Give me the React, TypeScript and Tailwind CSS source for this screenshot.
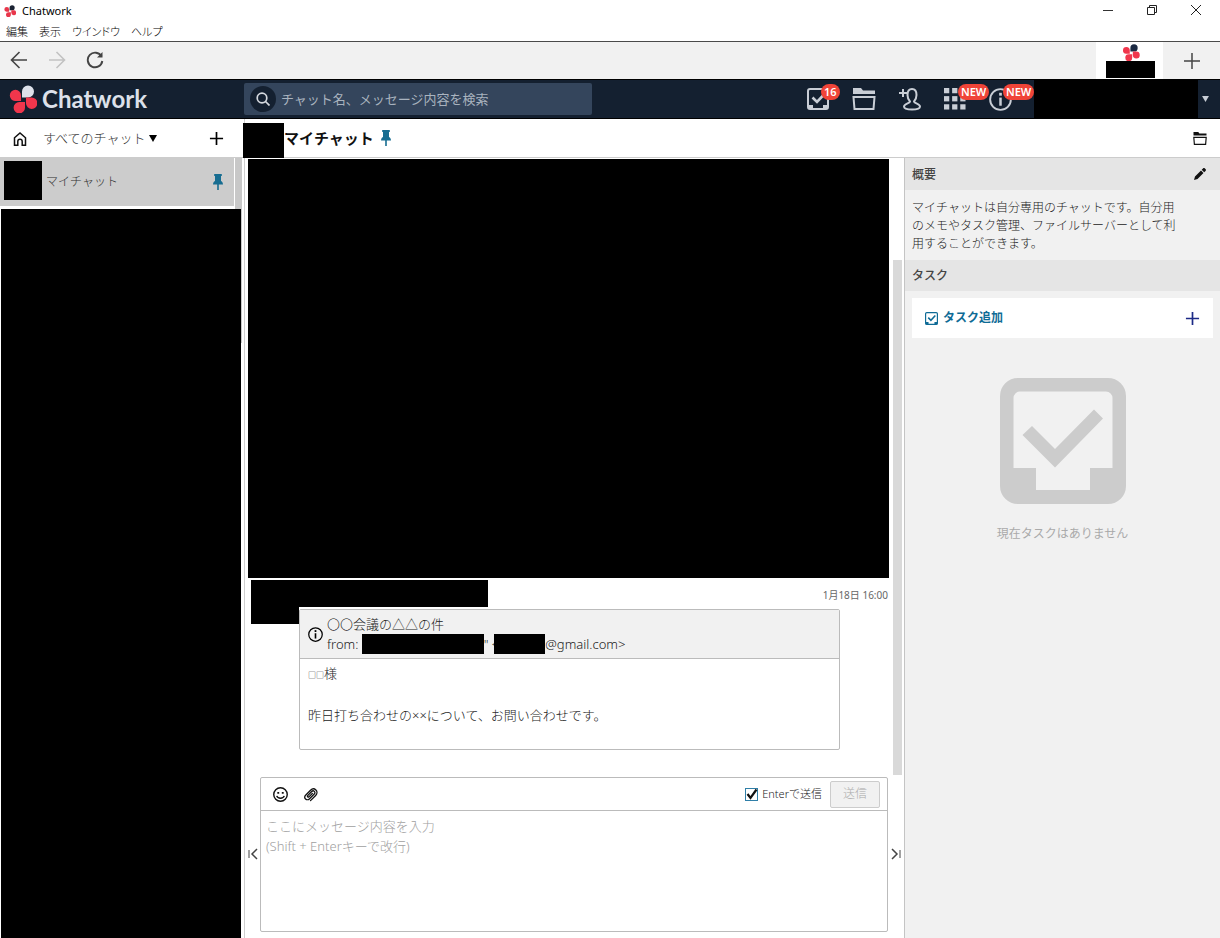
import React, { useState } from "react";

interface IconProps {
  className?: string;
}

interface LogoProps extends IconProps {
  accent: string;
  red: string;
}

const LogoMark: React.FC<LogoProps> = ({ className, accent, red }) => (
  <svg viewBox="0 0 28 28" className={className} aria-hidden="true">
    <path d="M13 12.5V6.5a6 6 0 1 1 6 6z" fill={accent} />
    <path d="M12 16H6a5.6 5.6 0 1 1 6-5.6z" fill={red} />
    <path d="M17 12.5h5.500a5.700 5.700 0 1 1-5.500 5.700z" fill={red} />
    <path d="M16 17v5.500a5.700 5.700 0 1 1-5.700-5.500z" fill={red} />
  </svg>
);

const TaskIcon: React.FC<IconProps> = ({ className }) => (
  <svg viewBox="0 0 126 126" className={className} fill="currentColor" aria-hidden="true">
    <path
      fillRule="evenodd"
      d="M18 0h90a18 18 0 0 1 18 18v90a18 18 0 0 1-18 18H18a18 18 0 0 1-18-18V18A18 18 0 0 1 18 0zM20 13.500a6.500 6.500 0 0 0-6.500 6.500v70H36v22h54V90h22.500V20a6.500 6.500 0 0 0-6.500-6.500z"
    />
    <path d="M32 48l23 23 39-39.500 9 9L55 89.500 22.500 57z" />
  </svg>
);

const SmallTaskIcon: React.FC<IconProps> = ({ className }) => (
  <svg viewBox="0 0 22 22" className={className} fill="none" stroke="currentColor" strokeWidth="2" aria-hidden="true">
    <rect x="1" y="1" width="20" height="20" rx="2" />
    <path d="M5.500 9.500l4.500 4.500 7.500-8" strokeWidth="2.600" />
    <path d="M1 17h5v4H1zM16 17h5v4h-5z" fill="currentColor" stroke="none" />
  </svg>
);

const FolderIcon: React.FC<IconProps> = ({ className }) => (
  <svg viewBox="0 0 24 22" className={className} aria-hidden="true">
    <path d="M1 0h8l2 2.500h12V6H1z" fill="currentColor" />
    <path d="M1.500 9h21l-1 12h-19z" fill="none" stroke="currentColor" strokeWidth="2" />
  </svg>
);

const AddPersonIcon: React.FC<IconProps> = ({ className }) => (
  <svg viewBox="0 0 22 24" className={className} fill="none" stroke="currentColor" strokeWidth="2" aria-hidden="true">
    <path d="M0 6h8M4 2v8" />
    <path d="M11 14.500c-2-2-2.500-4-2.500-6.500C8.500 4.500 10.200 2 13 2s4.500 2.500 4.500 6c0 2.500-.5 4.500-2.500 6.500 0 1.800 6 2 6 5 0 2-3.500 3-8 3s-8-1-8-3c0-3 6-3.200 6-5z" />
  </svg>
);

const GridIcon: React.FC<IconProps> = ({ className }) => (
  <svg viewBox="0 0 23 23" className={className} fill="currentColor" aria-hidden="true">
    {[0, 8.5, 17].map((y) =>
      [0, 8.5, 17].map((x) => <rect key={`${x}-${y}`} x={x} y={y} width="5.5" height="5.5" />),
    )}
  </svg>
);

const InfoIcon: React.FC<IconProps> = ({ className }) => (
  <svg viewBox="0 0 24 24" className={className} fill="none" stroke="currentColor" strokeWidth="2" aria-hidden="true">
    <circle cx="12" cy="12" r="10.800" />
    <path d="M12 10v8.500" strokeWidth="2.600" />
    <path d="M12 5v3" strokeWidth="2.800" />
  </svg>
);

const PinIcon: React.FC<IconProps> = ({ className }) => (
  <svg viewBox="0 0 10 16" className={className} fill="#176d91" aria-hidden="true">
    <path d="M1.200 0h7.600v2H8v5c1.200.6 1.900 1.600 2 3.500H5.800V16H4.200v-5.500H0C.1 8.600.8 7.600 2 7V2h-.8z" />
  </svg>
);

const PlusIcon: React.FC<IconProps> = ({ className }) => (
  <svg viewBox="0 0 16 16" className={className} fill="none" stroke="currentColor" strokeWidth="1.800" aria-hidden="true">
    <path d="M8 1v14M1 8h14" />
  </svg>
);

const TriangleIcon: React.FC<IconProps> = ({ className }) => (
  <svg viewBox="0 0 8 7" className={className} fill="currentColor" aria-hidden="true">
    <path d="M0 0h8L4 7z" />
  </svg>
);

const CollapseIcon: React.FC<IconProps> = ({ className }) => (
  <svg viewBox="0 0 10 12" className={className} fill="none" stroke="#444" strokeWidth="1.500" aria-hidden="true">
    <path d="M9 1L4 6l5 5" />
    <path d="M1 2v8" strokeWidth="1" />
  </svg>
);

const Badge: React.FC<{ children: React.ReactNode }> = ({ children }) => (
  <span className="absolute -top-1 left-[14px] rounded-full bg-[#f04438] px-[3px] text-[11px] leading-4 font-semibold text-white">
    {children}
  </span>
);

const WindowBar = () => (
  <div className="flex h-[22px] items-center pl-1 text-[11px] font-normal text-black">
    <LogoMark className="h-3 w-3" accent="#1b2333" red="#e8364a" />
    <span className="ml-[6px]">Chatwork</span>
    <div className="ml-auto flex pr-[2px] pb-[2px]">
      <button aria-label="最小化" className="flex h-5 w-11 items-center justify-center">
        <svg viewBox="0 0 10 10" className="h-[10px] w-[10px]" stroke="#333" fill="none">
          <path d="M0 5.500h10" />
        </svg>
      </button>
      <button aria-label="元に戻す" className="flex h-5 w-11 items-center justify-center">
        <svg viewBox="0 0 10 10" className="h-[10px] w-[10px]" stroke="#222" fill="none">
          <path d="M.5 2.500h7v7h-7zM2.500 2.500v-2h7v7h-2" />
        </svg>
      </button>
      <button aria-label="閉じる" className="flex h-5 w-11 items-center justify-center">
        <svg viewBox="0 0 10 10" className="h-[10px] w-[10px]" stroke="#222" fill="none">
          <path d="M0 0l10 10M10 0L0 10" />
        </svg>
      </button>
    </div>
  </div>
);

const MenuBar = () => (
  <nav className="flex h-5 items-center gap-[11px] border-b border-[#4a4a4a] pt-[2px] pl-[6px] text-[11px] text-black [font-feature-settings:'palt']">
    {["編集", "表示", "ウインドウ", "ヘルプ"].map((label) => (
      <button key={label}>{label}</button>
    ))}
  </nav>
);

const Toolbar = () => (
  <div className="flex h-[37px] items-stretch bg-[#f1f1f1]">
    <div className="flex items-center gap-5 pb-px pl-[10px]">
      <button aria-label="戻る">
        <svg viewBox="0 0 18 18" className="h-[18px] w-[18px]" stroke="#444" strokeWidth="1.600" fill="none">
          <path d="M17 9H1.500M9.500 1L1.500 9l8 8" />
        </svg>
      </button>
      <button aria-label="進む" disabled>
        <svg viewBox="0 0 18 18" className="h-[18px] w-[18px]" stroke="#c2c2c2" strokeWidth="1.600" fill="none">
          <path d="M1 9h15.500M8.500 1l8 8-8 8" />
        </svg>
      </button>
      <button aria-label="再読み込み">
        <svg viewBox="0 0 18 18" className="h-[18px] w-[18px]" stroke="#444" strokeWidth="1.900" fill="none">
          <path d="M15.500 5.500A7.300 7.300 0 1 0 16.300 10" />
          <path d="M16.500 1v5.500H11z" fill="#444" stroke="none" />
        </svg>
      </button>
    </div>
    <button aria-label="アカウント" className="ml-auto flex w-[67px] flex-col items-center bg-white pt-[2px] pl-[2px]">
      <LogoMark className="h-[17px] w-[18px]" accent="#1b2942" red="#f0364c" />
      <span className="h-[17px] w-[49px] bg-black" />
    </button>
    <button aria-label="アカウント追加" className="flex w-[57px] items-center justify-center">
      <svg viewBox="0 0 16 16" className="h-4 w-4" stroke="#444" strokeWidth="1.500" fill="none">
        <path d="M8 0v16M0 8h16" />
      </svg>
    </button>
  </div>
);

const Header = () => (
  <header className="flex h-10 items-center border-y border-black bg-[#142030] text-[#c9ced6]">
    <div className="flex w-[244px] items-center pl-[9px]">
      <LogoMark className="h-7 w-7" accent="#dde1ea" red="#f0364c" />
      <span className="ml-[5px] font-[family-name:Lato] text-[24px] leading-7 font-bold text-[#dde1ea]">Chatwork</span>
    </div>
    <label className="flex h-8 w-[348px] items-center rounded-xs bg-[#34455c] pl-[6px]">
      <span className="flex h-[26px] w-[26px] items-center justify-center rounded-full bg-[#142030]">
        <svg viewBox="0 0 14 14" className="h-[14px] w-[14px]" stroke="#d5d9df" strokeWidth="1.700" fill="none">
          <circle cx="6" cy="6" r="4.800" />
          <path d="M9.500 9.500l4 4" />
        </svg>
      </span>
      <input
        type="text"
        aria-label="検索"
        placeholder="チャット名、メッセージ内容を検索"
        className="ml-[5px] min-w-0 flex-1 bg-transparent pt-[2px] text-[13px] font-normal text-white outline-none placeholder:text-[#a9b3bf]"
      />
    </label>
    <div className="ml-auto flex items-center gap-[23px] pr-[22px]">
      <button aria-label="タスク" className="relative">
        <SmallTaskIcon className="h-[22px] w-[22px]" />
        <Badge>16</Badge>
      </button>
      <button aria-label="ファイル">
        <FolderIcon className="h-[22px] w-6" />
      </button>
      <button aria-label="コンタクト追加">
        <AddPersonIcon className="h-6 w-[22px]" />
      </button>
      <button aria-label="アプリ" className="relative">
        <GridIcon className="h-[22px] w-[22px]" />
        <Badge>NEW</Badge>
      </button>
      <button aria-label="お知らせ" className="relative">
        <InfoIcon className="h-[23px] w-[23px]" />
        <Badge>NEW</Badge>
      </button>
    </div>
    <button aria-label="アカウントメニュー" className="z-10 flex items-center gap-1 self-stretch pr-[11px]">
      <span className="h-[38px] w-[164px] bg-black" />
      <TriangleIcon className="h-[6px] w-[7px]" />
    </button>
  </header>
);

const Sidebar = () => (
  <aside className="flex w-[245px] shrink-0 flex-col border-r border-[#cfcfcf]">
    <div className="flex h-[39px] shrink-0 items-center border-b border-[#ccc] pt-px pr-5 pl-[13px]">
      <button aria-label="ホーム">
        <svg viewBox="0 0 14 14" className="h-[14px] w-[14px]" stroke="#111" strokeWidth="1.500" fill="none">
          <path d="M1.500 13.200V5.800L7 1l5.500 4.800v7.400H9.200V9.500a2.200 2.200 0 0 0-4.400 0v3.700z" />
        </svg>
      </button>
      <button className="ml-4 flex items-center gap-1 text-[13px] text-[#333]">
        すべてのチャット
        <TriangleIcon className="h-[7px] w-2 text-black" />
      </button>
      <button aria-label="チャット追加" className="ml-auto">
        <PlusIcon className="h-[15px] w-[15px] text-black" />
      </button>
    </div>
    <div className="flex h-[51px] shrink-0">
      <button className="flex h-12 w-[234px] items-center bg-[#ccc] pr-[11px] pl-1 text-[12px] text-[#333]">
        <span className="mr-1 mb-[3px] h-[39px] w-[38px] bg-black" />
        マイチャット
        <PinIcon className="ml-auto h-4 w-[10px]" />
      </button>
      <span className="ml-px w-[7px] bg-[#c8c8c8]" />
    </div>
    <div className="flex flex-1 items-start">
      <div className="ml-px w-60 self-stretch bg-black" />
      <span className="h-[134px] w-px bg-[#c8c8c8]" />
    </div>
  </aside>
);

const Message = () => (
  <article className="flex items-start pt-[2px] pl-[3px]">
    <div className="h-[44px] w-12 shrink-0 bg-black" />
    <div className="min-w-0 flex-1">
      <div className="flex h-[29px] items-start">
        <div className="h-[27px] w-[189px] bg-black" />
        <time className="mr-[3px] ml-auto pt-[7px] text-[10px] leading-4 font-normal text-[#666]">1月18日 16:00</time>
      </div>
      <section className="mr-[51px] rounded-xs border border-[#bbb] text-[13px] leading-5 text-[#222]">
        <div className="flex h-[49px] items-center gap-1 border-b border-[#bbb] bg-[#f1f1f1] pl-2">
          <InfoIcon className="h-[15px] w-[15px] text-black" />
          <div>
            <h2>〇〇会議の△△の件</h2>
            <p className="flex items-center whitespace-pre">
              from: <span className="h-5 w-[122px] bg-black" />
              {'" <'}
              <span className="-ml-[5px] h-5 w-[51px] bg-black" />
              @gmail.com&gt;
            </p>
          </div>
        </div>
        <div className="px-2 pt-1 pb-6">
          <p>
            <span className="text-[8px]">□□</span>様
          </p>
          <p className="pt-5">昨日打ち合わせの××について、お問い合わせです。</p>
        </div>
      </section>
    </div>
  </article>
);

const Composer = () => {
  const [sendOnEnter, setSendOnEnter] = useState(true);
  const [text, setText] = useState("");

  return (
    <form className="flex h-[161px] shrink-0 items-stretch" onSubmit={(event) => event.preventDefault()}>
      <button type="button" aria-label="左を閉じる" className="flex w-[15px] items-center justify-center pb-2">
        <CollapseIcon className="h-3 w-[10px]" />
      </button>
      <div className="mb-[6px] flex flex-1 flex-col rounded-xs border border-[#bbb]">
        <div className="flex h-[33px] items-center border-b border-[#bbb] pr-[7px] pl-3">
          <button type="button" aria-label="絵文字">
            <svg viewBox="0 0 16 16" className="h-[15px] w-[15px]" stroke="#111" strokeWidth="1.500" fill="none">
              <circle cx="8" cy="8" r="7.200" />
              <path d="M4 9.500c1 3.300 7 3.300 8 0" />
              <path d="M4.600 6.300h2M9.400 6.300h2" strokeWidth="2" />
            </svg>
          </button>
          <button type="button" aria-label="ファイル添付" className="ml-[15px]">
            <svg viewBox="0 0 16 16" className="h-[15px] w-[15px]" stroke="#111" strokeWidth="1.400" fill="none" strokeLinecap="round">
              <path d="M8 14.500l5.500-5.500c4-4-1.500-9.500-5.500-5.500L3 8.500c-3 3 1 7 4 4l5-5c2-2-.8-4.600-2.700-2.700L5 9.200c-.9.900.4 2.200 1.300 1.300L10 6.800" />
            </svg>
          </button>
          <label className="ml-auto flex items-center text-[11px] text-[#222]">
            <span className="relative mr-1 flex">
              <input
                type="checkbox"
                checked={sendOnEnter}
                onChange={(event) => setSendOnEnter(event.target.checked)}
                className="h-[13px] w-[13px] appearance-none border border-[#2f7fa8] bg-white"
              />
              {sendOnEnter && (
                <svg
                  viewBox="0 0 13 13"
                  className="pointer-events-none absolute inset-0 h-[13px] w-[13px]"
                  stroke="#111"
                  strokeWidth="2.200"
                  fill="none"
                >
                  <path d="M2.500 6l3 4L11.500 1.500" />
                </svg>
              )}
            </span>
            Enterで送信
          </label>
          <button
            type="submit"
            disabled={!text}
            className="ml-2 h-[27px] w-[50px] rounded-xs border border-[#ccc] bg-[#f1f1f1] text-[12px] text-[#aaa]"
          >
            送信
          </button>
        </div>
        <textarea
          aria-label="メッセージ"
          value={text}
          onChange={(event) => setText(event.target.value)}
          placeholder={"ここにメッセージ内容を入力\n(Shift + Enterキーで改行)"}
          className="flex-1 resize-none px-[5px] pt-[5px] text-[13px] leading-5 text-[#333] outline-none placeholder:text-[#a0a0a0]"
        />
      </div>
      <button type="button" aria-label="右を閉じる" className="flex w-4 items-center justify-center pb-2">
        <CollapseIcon className="h-3 w-[10px] rotate-180" />
      </button>
    </form>
  );
};

const TaskPanel = () => (
  <aside className="w-[316px] shrink-0 border-l border-[#c4c4c4] bg-[#f1f1f1] text-[12px] text-[#222]">
    <div className="flex h-8 items-center justify-between bg-[#e5e5e5] pt-[2px] pr-[14px] pl-[7px]">
      <h2 className="font-medium text-[#444]">概要</h2>
      <button aria-label="概要を編集" className="pb-[2px]">
        <svg viewBox="0 0 12 12" className="h-3 w-3" fill="#111">
          <path d="M0 12l1-3.500L7 2.500 9.500 5 3.500 11zM7.700 1.800L9 .5c.6-.6 1.300-.6 1.900 0l.6.600c.6.600.6 1.300 0 1.900L10.200 4.300z" />
        </svg>
      </button>
    </div>
    <p className="pt-[9px] pr-10 pb-[7px] pl-[7px] leading-[18px]">
      マイチャットは自分専用のチャットです。自分用のメモやタスク管理、ファイルサーバーとして利用することができます。
    </p>
    <div className="flex h-[31px] items-center bg-[#e5e5e5] pl-[7px]">
      <h2 className="font-medium text-[#444]">タスク</h2>
    </div>
    <div className="flex flex-col px-[7px] pt-[7px]">
      <button className="flex h-10 items-center bg-white pr-[13px] pl-[13px] font-bold text-[#0f6b96]">
        <SmallTaskIcon className="mr-[5px] h-[13px] w-[13px]" />
        タスク追加
        <PlusIcon className="ml-auto h-[15px] w-[15px] text-[#1c2a86]" />
      </button>
    </div>
    <div className="flex flex-col items-center pt-10 text-[#aaa]">
      <TaskIcon className="h-[126px] w-[126px] text-[#ccc]" />
      <p className="mt-5 leading-5 font-normal">現在タスクはありません</p>
    </div>
  </aside>
);

const App: React.FC = () => {
  return (
    <div className="flex h-screen flex-col bg-white font-['Noto_Sans','Noto_Sans_CJK_JP',sans-serif] font-light">
      <WindowBar />
      <MenuBar />
      <Toolbar />
      <Header />
      <div className="flex min-h-0 flex-1">
        <Sidebar />
        <main className="flex min-w-0 flex-1 flex-col">
          <div className="flex h-[39px] shrink-0 items-center border-b border-[#ccc] pr-3">
            <span className="mt-1 -ml-[2px] h-[35px] w-[41px] bg-black" />
            <h1 className="text-[15px] font-bold text-[#111]">マイチャット</h1>
            <PinIcon className="ml-[7px] h-4 w-[10px]" />
            <button aria-label="ファイル一覧" className="ml-auto">
              <FolderIcon className="h-[13px] w-4 text-[#111]" />
            </button>
          </div>
          <div className="flex min-h-0 flex-1">
            <div className="flex min-w-0 flex-1 flex-col">
              <div className="flex min-h-0 flex-1">
                <div className="flex min-w-0 flex-1 flex-col pt-px pl-[3px]">
                  <div className="mr-[2px] flex-1 bg-black" />
                  <div className="h-[199px] shrink-0">
                    <Message />
                  </div>
                </div>
                <div className="flex w-[13px] flex-col items-center pt-[102px] pb-[2px]">
                  <span className="w-[9px] flex-1 bg-[#d9d9d9]" />
                </div>
              </div>
              <Composer />
            </div>
            <TaskPanel />
          </div>
        </main>
      </div>
    </div>
  );
};

export default App;
